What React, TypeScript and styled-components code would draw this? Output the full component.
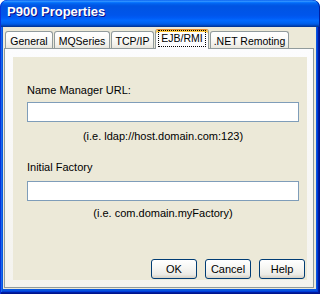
import React from "react";
import styled, { createGlobalStyle } from "styled-components";

const GlobalStyle = createGlobalStyle`
  html, body { margin: 0; padding: 0; background: #ffffff; }
  body { font-family: "Liberation Sans", Arial, sans-serif; font-size: 11px; }
  * { box-sizing: border-box; }
`;

const Window = styled.div`
  width: 320px;
  height: 294px;
  display: flex;
  flex-direction: column;
  border-radius: 7px 7px 0 0;
  overflow: hidden;
  background: #0054e3;
`;

const TitleBar = styled.div`
  height: 27px;
  flex: none;
  display: flex;
  align-items: flex-start;
  padding: 4px 0 0 7px;
  background: linear-gradient(
    to bottom,
    #0058ee 0%,
    #3593ff 4%,
    #288eff 6%,
    #127dff 8%,
    #036ffc 10%,
    #0262ee 14%,
    #0057e5 20%,
    #0054e3 24%,
    #0055eb 56%,
    #005bf5 66%,
    #026afe 76%,
    #0062ef 86%,
    #0052d6 92%,
    #0040ab 96%,
    #003092 100%
  );
  border-radius: 7px 7px 0 0;
  box-shadow: inset 1px 0 #0831d9, inset -1px 0 #001ea0;
`;

const Title = styled.span`
  font-family: "Liberation Sans", Arial, sans-serif;
  font-weight: bold;
  font-size: 13px;
  line-height: 16px;
  color: #ffffff;
  text-shadow: 1px 1px #0f1089;
`;

const Frame = styled.div`
  flex: 1;
  display: flex;
  padding: 0 4px 5px 3px;
  background: #0855dd;
  box-shadow: inset 1px 0 #0831d9, inset -1px -1px #00138c, inset -2px -2px #001ea0,
    inset 2px 0 #166aee, inset -3px -3px #003bda;
`;

const Face = styled.div`
  flex: 1;
  display: flex;
  flex-direction: column;
  padding-top: 2px;
  background: #ece9d8;
`;

const TabStrip = styled.div`
  height: 19px;
  flex: none;
  display: flex;
  align-items: flex-end;
  gap: 1px;
  padding-left: 2px;
  position: relative;
  z-index: 1;
`;

const Tab = styled.div<{ $w: number; $active?: boolean }>`
  width: ${(p) => p.$w}px;
  height: ${(p) => (p.$active ? 20 : 17)}px;
  margin-bottom: ${(p) => (p.$active ? -1 : 0)}px;
  display: flex;
  justify-content: center;
  align-items: flex-start;
  padding-top: ${(p) => (p.$active ? 2 : 3)}px;
  border: 1px solid #919b9c;
  border-bottom: none;
  border-radius: 3px 3px 0 0;
  font-size: 10.5px;
  line-height: 13px;
  color: #000000;
  white-space: nowrap;
  background: ${(p) =>
    p.$active
      ? "#fcfcfe"
      : "linear-gradient(to bottom, #ffffff 0%, #fbfbf9 40%, #f1f0eb 80%, #e8e6dc 100%)"};
  border-top-color: ${(p) => (p.$active ? "#e68b2c" : "#919b9c")};
  box-shadow: ${(p) => (p.$active ? "inset 0 2px #ffc73c" : "none")};
`;

const FocusLabel = styled.span`
  outline: 1px dotted #000000;
  outline-offset: 0;
  padding: 1px 2px;
  margin-top: -1px;
`;

const Panel = styled.div`
  flex: 1;
  display: flex;
  margin: 0 2px 1px 1px;
  padding: 8px 6px 7px 8px;
  border: 1px solid #919b9c;
  background: linear-gradient(to bottom, #fcfcfe 0%, #f4f3ee 100%);
`;

const Content = styled.div`
  flex: 1;
  display: flex;
  flex-direction: column;
  padding: 0 2px 1px 14px;
  background: #ece9d8;
`;

const Label = styled.div<{ $top: number }>`
  margin-top: ${(p) => p.$top}px;
  font-size: 11px;
  line-height: 13px;
  color: #000000;
`;

const Field = styled.input<{ $top: number }>`
  margin-top: ${(p) => p.$top}px;
  width: 272px;
  height: 20px;
  padding: 0 3px;
  border: 1px solid #7f9db9;
  background: #ffffff;
  font-family: "Liberation Sans", Arial, sans-serif;
  font-size: 11px;
  outline: none;
`;

const Hint = styled.div<{ $top: number }>`
  margin-top: ${(p) => p.$top}px;
  width: 272px;
  text-align: center;
  font-size: 11px;
  line-height: 13px;
  color: #000000;
`;

const ButtonRow = styled.div`
  margin-top: auto;
  display: flex;
  justify-content: flex-end;
  gap: 8px;
`;

const Button = styled.button`
  width: 46px;
  height: 20px;
  padding: 0;
  border: 1px solid #003c74;
  border-radius: 3px;
  background: linear-gradient(to bottom, #ffffff 0%, #f7f7f4 40%, #ecebe6 80%, #d6d0c5 100%);
  font-family: "Liberation Sans", Arial, sans-serif;
  font-size: 11px;
  color: #000000;
`;

export default function App() {
  return (
    <>
      <GlobalStyle />
      <Window>
        <TitleBar>
          <Title>P900 Properties</Title>
        </TitleBar>
        <Frame>
          <Face>
            <TabStrip>
              <Tab $w={48}>General</Tab>
              <Tab $w={56}>MQSeries</Tab>
              <Tab $w={43}>TCP/IP</Tab>
              <Tab $w={54} $active>
                <FocusLabel>EJB/RMI</FocusLabel>
              </Tab>
              <Tab $w={79}>.NET Remoting</Tab>
            </TabStrip>
            <Panel>
              <Content>
                <Label $top={27}>Name Manager URL:</Label>
                <Field $top={5} />
                <Hint $top={8}>(i.e. ldap://host.domain.com:123)</Hint>
                <Label $top={18}>Initial Factory</Label>
                <Field $top={7} />
                <Hint $top={6}>(i.e. com.domain.myFactory)</Hint>
                <ButtonRow>
                  <Button>OK</Button>
                  <Button>Cancel</Button>
                  <Button>Help</Button>
                </ButtonRow>
              </Content>
            </Panel>
          </Face>
        </Frame>
      </Window>
    </>
  );
}
